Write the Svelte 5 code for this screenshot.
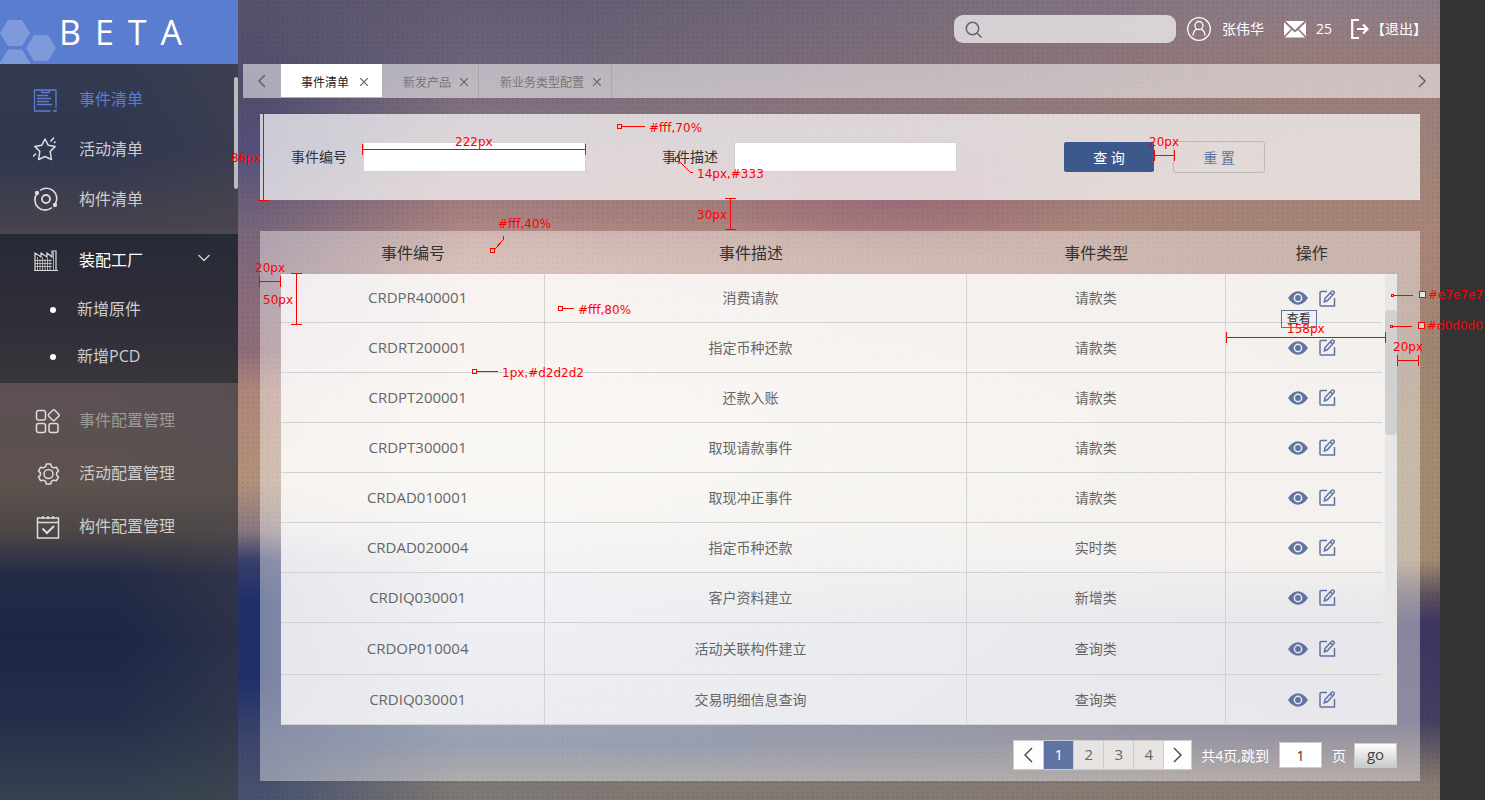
<script>
  let keyword = $state('');
  let eventNo = $state('');
  let eventDesc = $state('');
  let jump = $state('1');

  const tabs = [
    { name: '事件清单', active: true },
    { name: '新发产品', active: false },
    { name: '新业务类型配置', active: false }
  ];

  const rows = [
    ['CRDPR400001', '消费请款', '请款类'],
    ['CRDRT200001', '指定币种还款', '请款类'],
    ['CRDPT200001', '还款入账', '请款类'],
    ['CRDPT300001', '取现请款事件', '请款类'],
    ['CRDAD010001', '取现冲正事件', '请款类'],
    ['CRDAD020004', '指定币种还款', '实时类'],
    ['CRDIQ030001', '客户资料建立', '新增类'],
    ['CRDOP010004', '活动关联构件建立', '查询类'],
    ['CRDIQ030001', '交易明细信息查询', '查询类']
  ];

  const pages = [1, 2, 3, 4];
</script>

<div class="page">
  <div class="shell">
    <div class="photo left"></div>
    <div class="photo right"></div>
    <div class="photo dots"></div>

    <aside class="sidebar">
      <div class="brand">
        <svg class="hex" width="58" height="64" viewBox="0 0 58 64" aria-hidden="true">
          <g fill="#7f9adb">
            <path d="M8 20h14l8 13-8 13H8L0 33z" />
            <path d="M34 35h14l8 13-8 13H34l-8-13z" />
            <path d="M8 49.500h14l8 13v2H0v-2z" />
          </g>
        </svg>
        <span>BETA</span>
      </div>

      <nav class="menu">
        <ul class="block first">
          <li class="on">
            <svg width="26" height="26" viewBox="0 0 26 26"><path d="M7 4H1.500v21h16M20 25h3v-1.500M23 22V4H7M8 4l1 2.500h7L17 4M4 9.500h11M4 12.500h14M4 15.500h12M4 18.500h15" stroke-width="1.300" /></svg>
            <a href="#events">事件清单</a>
          </li>
          <li>
            <svg width="26" height="26" viewBox="0 0 26 26"><path d="M12 3l3.200 6.200 7 1.200-5 5 1.200 8.100-6.400-3-6.400 3 1.200-8.100-5-5 7-1.200zM17.500 5.500l3.500-4M21 7l1.500-1.500M0 20.500L3 17.500" stroke-linejoin="round" /></svg>
            <a href="#activities">活动清单</a>
          </li>
          <li>
            <svg width="26" height="26" viewBox="0 0 26 26"><circle cx="13" cy="13" r="4" stroke-width="1.800" /><path d="M7 4.500A10.300 10.300 0 0 1 22.500 17.500M4 7.500a10.300 10.300 0 0 0 15 14" stroke-width="1.600" /><circle cx="4" cy="7" r="1.400" fill="#ddd" /><circle cx="22" cy="19" r="1.400" fill="#ddd" /></svg>
            <a href="#components">构件清单</a>
          </li>
        </ul>

        <ul class="block group">
          <li class="head">
            <svg width="26" height="24" viewBox="0 0 26 24"><path d="M2 22V5l6 4V5l6 4V5l5 4V3h4v19M1 22.500h24" stroke-width="1.200" /><path d="M20.500 4v18M4.500 9v13M7 11v11M9.500 9v13M12 11v11M14.500 10v12M17 11v11M2 12.500h17M2 15.500h17M2 18.500h17" stroke-width=".7" /></svg>
            <a href="#factory">装配工厂</a>
            <svg class="arrow" width="14" height="8" viewBox="0 0 14 8"><path d="M1.500 1l5.500 5.500L12.500 1" /></svg>
          </li>
          <li class="sub"><i></i><a href="#new-part">新增原件</a></li>
          <li class="sub"><i></i><a href="#new-pcd">新增PCD</a></li>
        </ul>

        <ul class="block last">
          <li class="dim">
            <svg width="26" height="26" viewBox="0 0 26 26"><rect x="1.500" y="2.500" width="9" height="9.500" rx="2" /><rect x="1.500" y="15.500" width="9" height="9" rx="2" /><rect x="14" y="15.500" width="9" height="9" rx="2" /><path d="M17.700 2.200q1-1 2 0l4 4q1 1 0 2l-4 4q-1 1-2 0l-4-4q-1-1 0-2z" /></svg>
            <a href="#event-config">事件配置管理</a>
          </li>
          <li>
            <svg width="26" height="26" viewBox="0 0 26 26"><circle cx="13.500" cy="13" r="4.500" /><path d="M11.300 3h4.400l.7 2.600 2.300 1.300 2.600-.7 2.200 3.800-1.900 1.900v2.200l1.900 1.900-2.200 3.800-2.600-.7-2.300 1.300-.7 2.600h-4.400l-.7-2.600-2.300-1.300-2.600.7L3.500 16l1.900-1.900v-2.200L3.500 10l2.200-3.800 2.600.7 2.300-1.300z" stroke-linejoin="round" /></svg>
            <a href="#activity-config">活动配置管理</a>
          </li>
          <li>
            <svg width="26" height="26" viewBox="0 0 26 26"><path d="M2.500 4h21v20h-21zM2.500 8.500h21M8 2v3M13 2v3M18 2v3" /><path d="M7.500 14.500l4.500 4.500 7-7" stroke-width="2" /></svg>
            <a href="#component-config">构件配置管理</a>
          </li>
        </ul>
      </nav>
      <div class="side-thumb"></div>
    </aside>

    <div class="main">
      <header class="topbar">
        <label class="search">
          <svg width="18" height="18" viewBox="0 0 18 18"><circle cx="7.500" cy="7.500" r="6.200" /><path d="M12 12l4.500 4.500" /></svg>
          <input type="search" aria-label="search" bind:value={keyword} />
        </label>
        <svg class="avatar" width="24" height="24" viewBox="0 0 24 24"><circle cx="12" cy="12" r="11.300" /><circle cx="12" cy="8.500" r="4" /><path d="M6 18.500c.3-3.800 2-5.500 4-6.300M18 18.500c-.3-3.800-2-5.500-4-6.300" /></svg>
        <span class="user">张伟华</span>
        <svg class="mail" width="22" height="17" viewBox="0 0 22 17"><path fill="#fff" d="M1.500 0h19L11 9zM0 1.200L7 8 0 15zM22 1.200L15 8l7 7zM1 16.500L8 9l3 2.500L14 9l7 7.500z" /></svg>
        <span class="count">25</span>
        <svg class="exit" width="18" height="20" viewBox="0 0 18 20"><path d="M8 1H1.200v18H8M6 10h10M12 5.500l4.500 4.500-4.500 4.500" /></svg>
        <a class="logout" href="#logout">【退出】</a>
      </header>

      <div class="tabs">
        <button class="step" aria-label="previous"><svg width="9" height="14" viewBox="0 0 9 14"><path d="M8 1L2 7l6 6" /></svg></button>
        {#each tabs as tab}
          <div class="tab" class:active={tab.active}>
            <a href="#tab">{tab.name}</a>
            <button aria-label="close"><svg width="8" height="8" viewBox="0 0 8 8"><path d="M0 0l8 8M8 0L0 8" /></svg></button>
          </div>
        {/each}
        <button class="step next" aria-label="next"><svg width="9" height="14" viewBox="0 0 9 14"><path d="M1 1l6 6-6 6" /></svg></button>
      </div>

      <form class="filter" onsubmit={(e) => e.preventDefault()}>
        <label for="no">事件编号</label>
        <input id="no" type="text" bind:value={eventNo} />
        <label class="second" for="desc">事件描述</label>
        <input id="desc" type="text" bind:value={eventDesc} />
        <button class="query" type="submit">查 询</button>
        <button class="reset" type="reset">重 置</button>
      </form>

      <section class="panel">
        <div class="grid">
          <table>
            <colgroup><col class="c1" /><col class="c2" /><col class="c3" /><col class="c4" /></colgroup>
            <thead>
              <tr><th>事件编号</th><th>事件描述</th><th>事件类型</th><th>操作</th></tr>
            </thead>
            <tbody>
              {#each rows as row, i}
                <tr>
                  <td>{row[0]}</td>
                  <td>{row[1]}</td>
                  <td>{row[2]}</td>
                  <td>
                    <div class="ops">
                      <button aria-label="view"><svg width="20" height="14" viewBox="0 0 20 14"><path fill="#5f74a3" fill-rule="evenodd" d="M0 7C3 2.500 6.300.3 10 .3S17 2.500 20 7c-3 4.500-6.300 6.700-10 6.700S3 11.500 0 7zM10 2.600a4.400 4.400 0 1 0 0 8.800 4.400 4.400 0 0 0 0-8.800z" /><circle cx="10" cy="7" r="2.900" fill="#5f74a3" /></svg></button>
                      <button aria-label="edit"><svg width="17" height="17" viewBox="0 0 17 17"><g fill="none" stroke="#5f74a3" stroke-width="1.500"><path d="M8 1.500H2q-1 0-1 1V15q0 1 1 1h13.500V8" /><path d="M6 8.500l6.500-7q1.200-1 2.300 0t0 2.300l-6.500 7-3 1zM11.500 3l2 2" /></g></svg></button>
                      {#if i === 0}<span class="tip">查看</span>{/if}
                    </div>
                  </td>
                </tr>
              {/each}
            </tbody>
          </table>
          <div class="gutter"><div class="track"><div class="thumb"></div></div></div>
        </div>

        <div class="pager">
          <div class="pages">
            <button class="edge" aria-label="previous page"><svg width="9" height="16" viewBox="0 0 9 16"><path d="M8 1L1 8l7 7" /></svg></button>
            {#each pages as p}
              <button class:current={p === 1}>{p}</button>
            {/each}
            <button class="edge" aria-label="next page"><svg width="9" height="16" viewBox="0 0 9 16"><path d="M1 1l7 7-7 7" /></svg></button>
          </div>
          <label for="jump">共4页,跳到</label>
          <input id="jump" type="text" bind:value={jump} />
          <span>页</span>
          <button class="go">go</button>
        </div>
      </section>
    </div>
  </div>

  <svg class="notes" width="1485" height="800" viewBox="0 0 1485 800">
    <g fill="none" stroke="#f00" stroke-width="1" shape-rendering="crispEdges">
      <path d="M263.500 114v87M258 113.500h11M258 200.500h11" />
      <path d="M362.500 144v11M585.500 144v11M362 149.500h223" />
      <path d="M617.500 124.500h4v4h-4zM622 126.500h23" />
      <path d="M675.500 157.500h4v4h-4zM680 162l10 10h3" />
      <path d="M1154.500 150v11M1174.500 150v11M1154 155.500h20" />
      <path d="M730.500 198v32M725 198.500h11M725 229.500h11" />
      <path d="M490.500 248.500h4v4h-4zM495 249l8-9v-4" />
      <path d="M259.500 276v11M280.500 276v11M259 281.500h21" />
      <path d="M296.500 273v51M291 273.500h11M291 324.500h11" />
      <path d="M558.500 306.500h4v4h-4zM563 308.500h11" />
      <path d="M472.500 369.500h4v4h-4zM477 371.500h21" />
      <path d="M1226.500 332v11M1385.500 332v11M1226 337.500h160" />
      <path d="M1397.500 355v11M1418.500 355v11M1397 360.500h21" />
      <path d="M1391.500 294.500h2v2h-2zM1394 295.500h19" />
      <path d="M1390.500 325.500h2v2h-2zM1393 326.500h19" />
      <path d="M1419.500 291.500h6v6h-6z" fill="#e7e7e7" />
      <path d="M1418.500 322.500h6v6h-6z" fill="#d0d0d0" />
    </g>
    <g fill="#f00">
      <text x="231" y="162">86px</text>
      <text x="455" y="146">222px</text>
      <text x="649" y="132">#fff,70%</text>
      <text x="697" y="178">14px,#333</text>
      <text x="1149" y="146">20px</text>
      <text x="697" y="219">30px</text>
      <text x="498" y="228">#fff,40%</text>
      <text x="255" y="272">20px</text>
      <text x="263" y="304">50px</text>
      <text x="578" y="314">#fff,80%</text>
      <text x="502" y="377">1px,#d2d2d2</text>
      <text x="1287" y="333">158px</text>
      <text x="1393" y="351">20px</text>
      <text x="1428" y="299">#e7e7e7</text>
      <text x="1427" y="330">#d0d0d0</text>
    </g>
  </svg>
</div>

<style>
  :global(body) { margin: 0; background: #333; }
  .page { position: relative; background: #333; padding-right: 45px; overflow: hidden; font-family: "Open Sans", "Noto Sans CJK SC", sans-serif; font-size: 14px; color: #333; }
  .shell { position: relative; display: flex; min-height: 100vh; background: linear-gradient(#645d72 0, #6c6378 60px, #80707f 105px, #a8807f 215px, #be9489 260px, #c8a090 330px, #d8c4a8 440px, #ccb8a0 510px, #8f92a4 570px, #6c7c98 640px, #55627f 745px, #807a76 785px, #7f7873 800px); }
  .photo { position: absolute; inset: 0; }
  .left { background: linear-gradient(#57536c 0, #504d6e 100px, #55507a 150px, #78667a 230px, #8c6c7c 310px, #8e6c7a 350px, #b0857a 390px, #b2927a 480px, #8a7880 530px, #38406c 560px, #20306a 600px, #22306a 680px, #3c466c 740px, #47536f 800px); -webkit-mask-image: linear-gradient(90deg, #000 260px, transparent 460px); mask-image: linear-gradient(90deg, #000 260px, transparent 460px); }
  .right { background: linear-gradient(#8d7c88 0, #9a7c7a 70px, #9d827a 140px, #a98577 240px, #a08472 350px, #a48b70 450px, #a28a70 560px, #5d5060 595px, #3b3560 625px, #443e60 720px, #6a6068 755px, #8a7c74 785px, #8a7c72); -webkit-mask-image: linear-gradient(90deg, transparent 560px, #000 1300px); mask-image: linear-gradient(90deg, transparent 560px, #000 1300px); }
  .dots { background: radial-gradient(ellipse 220px 70px at 900px 190px, rgba(140, 70, 115, .4), transparent), radial-gradient(circle, rgba(0, 0, 0, .08) 0, rgba(0, 0, 0, .08) 1px, transparent 1px) 0 0 / 5px 5px; }

  a { color: inherit; text-decoration: none; }
  button { font: inherit; margin: 0; padding: 0; border: 0; background: none; color: inherit; cursor: pointer; display: flex; align-items: center; justify-content: center; }
  input { font: inherit; box-sizing: border-box; outline: none; min-width: 0; }
  svg { flex: none; display: block; }
  ul { list-style: none; margin: 0; padding: 0; }

  .sidebar { position: relative; flex: none; width: 238px; color: #ccc; background: linear-gradient(90deg, transparent 50%, rgba(80, 75, 80, .3)), linear-gradient(#343a50 64px, #31374f 150px, #45424d 225px, #4d4955 240px, #5c5054 385px, #5c524e 490px, #4d4747 530px, #242b45 575px, #1c2646 640px, #232f4a 720px, #34424f 800px); }
  .brand { position: relative; display: flex; align-items: center; height: 64px; background: #5a7dd1; color: #fff; }
  .hex { position: absolute; left: 0; top: 0; }
  .brand span { position: relative; padding-left: 59px; font-size: 34px; line-height: 64px; letter-spacing: 14px; }
  .menu { font-size: 16px; }
  .block { display: flex; flex-direction: column; }
  .block li { display: flex; align-items: center; height: 50px; padding-left: 33px; }
  .block li > svg { fill: none; stroke: #ddd; stroke-width: 1.5; width: 26px; }
  .block a { padding: 0 0 3px 20px; }
  .first { padding: 10px 0; }
  .first .on { color: #5a7dd1; }
  .first .on > svg { stroke: #5a7dd1; }
  .group { background: linear-gradient(#272a37, #2e2d38 50%, #38353a); padding-bottom: 5px; }
  .group li { height: 47px; }
  .group .head { color: #fff; height: 52px; }
  .group .head .arrow { width: 14px; margin: 0 0 4px 54px; stroke: #ccc; }
  .group i { width: 6px; height: 6px; border-radius: 50%; background: #fff; margin-left: 17px; }
  .group .sub a { padding-left: 21px; }
  .group { padding-bottom: 3px; }
  .last { padding-top: 11px; }
  .last li { height: 53px; padding-left: 35px; }
  .last a { padding-left: 18px; }
  .last .dim a { color: #999; }
  .side-thumb { position: absolute; right: 0; top: 77px; width: 4px; height: 112px; border-radius: 2px; background: #bbb; }

  .main { position: relative; flex: 1; min-width: 0; display: flex; flex-direction: column; }
  .topbar { display: flex; align-items: center; justify-content: flex-end; height: 58px; padding: 0 13px 6px 0; color: #fff; }
  .topbar span, .logout { padding-bottom: 2px; }
  .search { display: flex; align-items: center; width: 222px; height: 28px; border-radius: 9px; background: rgba(255, 255, 255, .68); margin-right: 11px; }
  .search svg { margin: 2px 0 0 11px; fill: none; stroke: #666; stroke-width: 1.5; }
  .search input { flex: 1; border: 0; background: none; }
  .avatar { fill: none; stroke: #fff; stroke-width: 1.3; margin-right: 11px; }
  .user { margin-right: 20px; }
  .mail { margin-right: 10px; }
  .count { margin-right: 19px; }
  .exit { fill: none; stroke: #fff; stroke-width: 2.2; margin-right: 2px; }

  .tabs { display: flex; height: 34px; margin-left: 5px; background: rgba(255, 255, 255, .52); font-size: 12px; color: #777; }
  .step { width: 36px; padding-right: 2px; box-sizing: content-box; }
  .step svg { fill: none; stroke: #666; stroke-width: 1.6; }
  .next { margin-left: auto; padding: 0 0 0 2px; }
  .tab { display: flex; align-items: center; gap: 9px; padding: 2px 10px 0 21px; border-right: 1px solid #aaa6ac; }
  .tab svg { fill: none; stroke: #666; stroke-width: 1.2; }
  .tab.active { background: #fff; color: #222; gap: 11px; padding-right: 14px; height: 31px; border: 0; padding-left: 20px; }

  .filter { display: flex; align-items: center; height: 86px; margin: 16px 20px 0 22px; padding-left: 31px; box-sizing: border-box; background: rgba(255, 255, 255, .7); }
  .filter input { width: 223px; height: 30px; border: 1px solid #d2d2d2; background: #fff; margin-left: 16px; }
  .filter label { padding-bottom: 2px; }
  .filter .second { margin-left: 76px; }
  .filter .query { width: 90px; height: 30px; margin-left: 107px; border-radius: 2px; background: #3d598c; color: #fff; }
  .filter .reset { box-sizing: border-box; width: 92px; height: 32px; margin-left: 19px; border: 1px solid #bbb; border-radius: 3px; color: #5f74a3; }

  .panel { margin: 31px 20px 19px 22px; padding: 0 23px 11px 21px; background: rgba(255, 255, 255, .4); }
  .grid { display: flex; }
  table { flex: 1; border-collapse: separate; border-spacing: 0; table-layout: fixed; }
  .c1 { width: 24%; }
  .c2 { width: 38.3%; }
  .c3 { width: 23.5%; }
  th { height: 43px; padding: 0 0 2px; box-sizing: border-box; font-size: 16px; font-weight: 400; }
  th:nth-child(2), td:nth-child(2) { padding-right: 10px; }
  th:last-child, td:last-child { padding-left: 16px; }
  tbody { background: rgba(255, 255, 255, .8); }
  td { box-sizing: border-box; height: 50px; padding: 0 0 2px; text-align: center; color: #666; border-bottom: 1px solid #d2d2d2; border-right: 1px solid #d2d2d2; }
  tr:first-child td { height: 49px; }
  tr:nth-child(8) td { height: 52px; }
  td:first-child { padding-left: 10px; font-size: 15px; }
  td:last-child { border-right: 0; padding-bottom: 0; }
  .ops { position: relative; display: flex; align-items: center; justify-content: center; gap: 11px; }
  .tip { position: absolute; z-index: 1; left: 50%; top: 20px; margin-left: -31px; padding: 0 5px; border: 1px solid #5f74a3; font-size: 12px; line-height: 16px; color: #333; }
  .gutter { flex: none; display: flex; justify-content: flex-end; width: 15px; margin-top: 43px; background: rgba(255, 255, 255, .8); border-bottom: 1px solid #d2d2d2; }
  .track { width: 12px; background: #e7e7e7; border-radius: 4px; }
  .thumb { width: 12px; height: 125px; margin-top: 36px; border-radius: 4px; background: #d0d0d0; }

  .pager { display: flex; align-items: center; justify-content: flex-end; margin-top: 15px; color: #fff; }
  .pages { display: flex; border: 1px solid #ccc; margin-right: 9px; font-size: 15px; }
  .pages button { box-sizing: border-box; width: 30px; height: 28px; padding-bottom: 2px; background: #e8e3e3; color: #666; border-left: 1px solid #ccc; }
  .pages button:first-child { border-left: 0; width: 29px; }
  .pages .current { background: #5f74a3; color: #fff; }
  .pages .edge { background: #fdfdfd; width: 28px; padding-bottom: 0; }
  .pages svg { fill: none; stroke: #444; stroke-width: 1.4; }
  .pager input { width: 43px; height: 26px; border: 1px solid #ccc; background: #fff; margin: 0 10px; text-align: center; color: #333; padding: 0; }
  .go { width: 43px; height: 25px; margin-left: 8px; padding-bottom: 2px; border: 1px solid #ccc; background: linear-gradient(#fff, #c8c8c8); color: #444; box-sizing: border-box; font-size: 15px; }

  .notes { position: absolute; left: 0; top: 0; pointer-events: none; }
  .notes text { font-family: "DejaVu Sans", sans-serif; font-size: 12px; }
</style>
